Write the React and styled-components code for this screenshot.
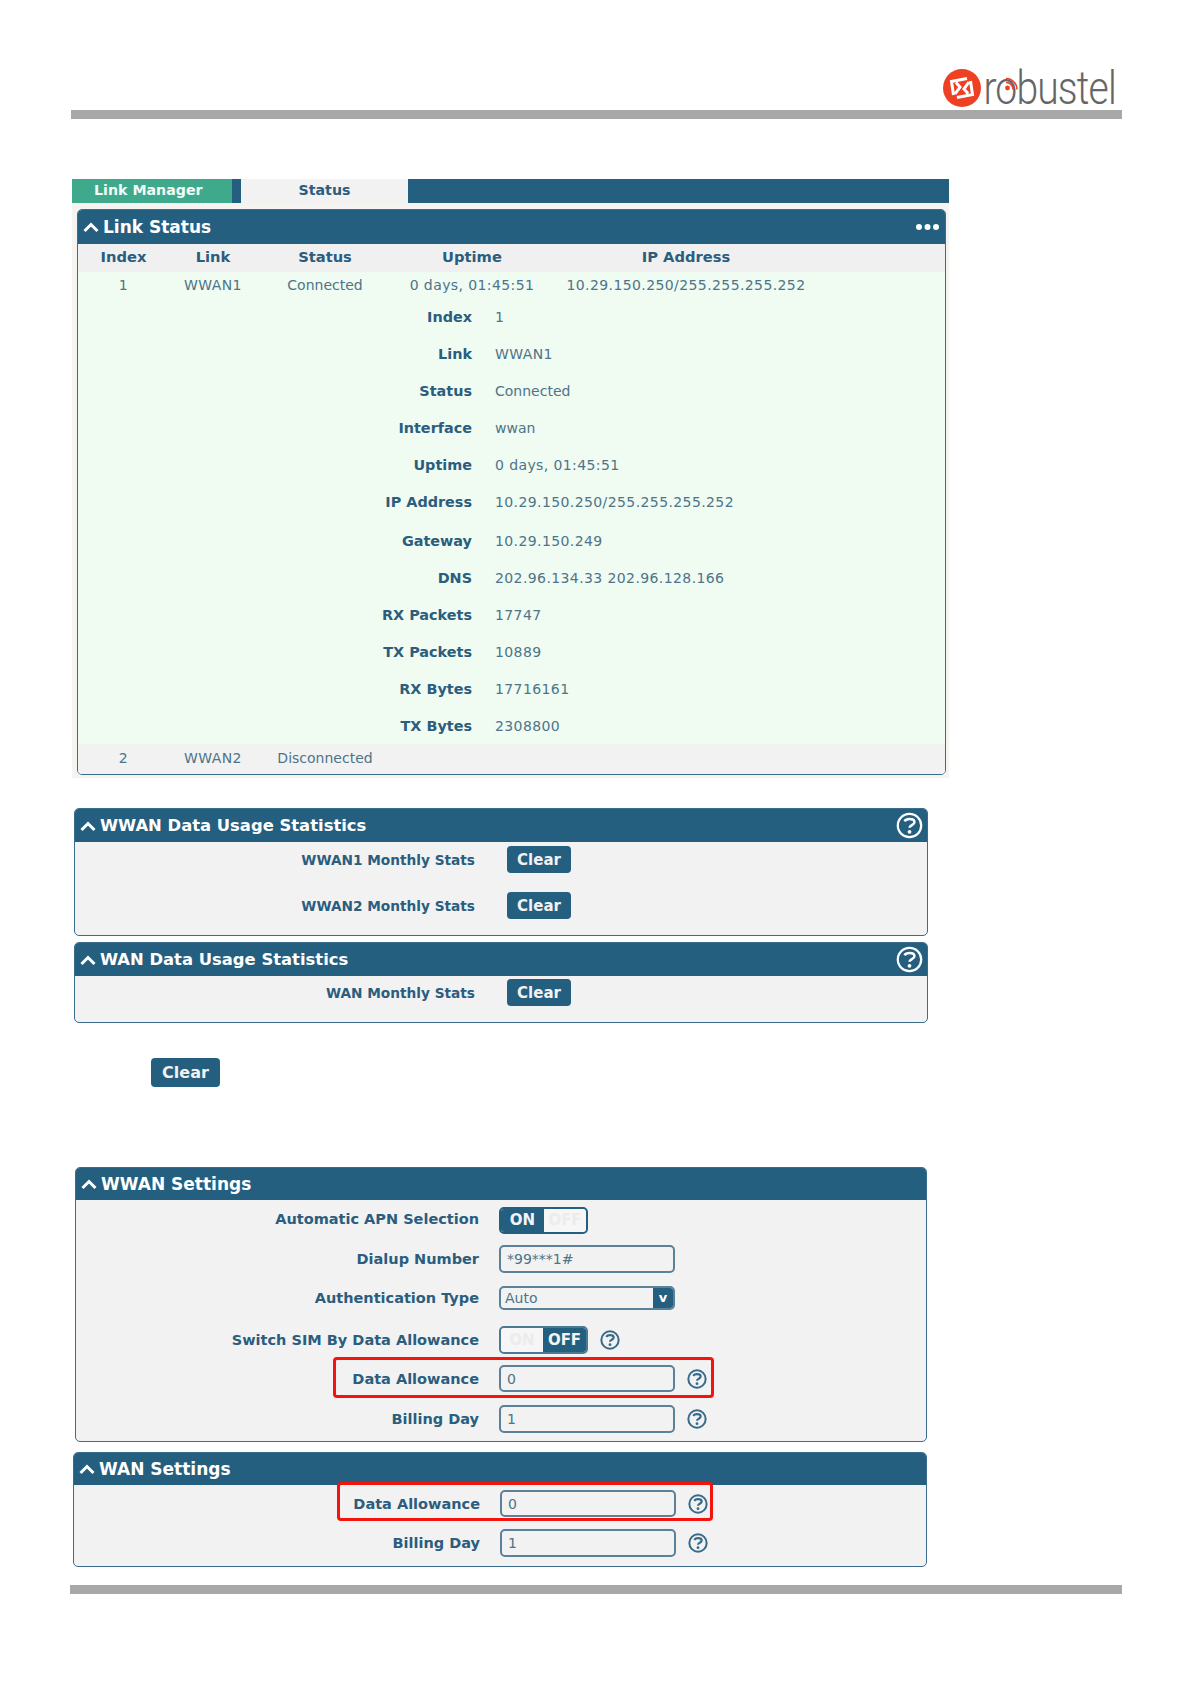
import React from "react"
import styled, { createGlobalStyle } from "styled-components"

const GlobalStyle = createGlobalStyle`
  html, body { margin: 0; padding: 0; background: #fff; }
  body { font-family: "DejaVu Sans", Verdana, sans-serif; }
`

const NAVY = "#255f80"
const LABEL = "#2b5d7e"
const VALUE = "#4d7489"

const Page = styled.div`
  width: 1191px;
  height: 1684px;
  display: flex;
  flex-direction: column;
  overflow: hidden;
`

const Brand = styled.header`
  height: 110px;
  display: flex;
  align-items: flex-end;
  justify-content: flex-end;
  padding: 0 75px 2px 0;
  box-sizing: border-box;
`

const BrandMark = styled.svg`
  margin-right: 5px;
  margin-bottom: 1px;
`

const BrandName = styled.span`
  position: relative;
  width: 130px;
  height: 40px;
  display: flex;
  justify-content: flex-end;
  font-family: Roboto, "Liberation Sans", sans-serif;
  font-size: 46px;
  font-weight: 300;
  line-height: 40px;
  letter-spacing: -1px;
  color: #666;
  white-space: nowrap;
`

const BrandText = styled.span`
  display: block;
  transform: scaleX(0.85);
  transform-origin: right center;
`

const Arcs = styled.svg`
  position: absolute;
  left: 19px;
  top: 9px;
`

const Rule = styled.div`
  height: 9px;
  margin: ${({ $mt }) => $mt || 0}px ${({ $right }) => $right}px 0 ${({ $left }) => $left}px;
  background: #a8a8a8;
`

const Tabs = styled.nav`
  height: 24px;
  display: flex;
  background: ${NAVY};
  font-size: 14.2px;
  font-weight: 700;
  line-height: 23px;
`

const Tab = styled.div`
  width: ${({ $w }) => $w}px;
  margin-right: ${({ $mr }) => $mr || 0}px;
  text-align: ${({ $active }) => ($active ? "center" : "left")};
  padding-left: ${({ $active }) => ($active ? 0 : 22)}px;
  box-sizing: border-box;
  color: ${({ $active }) => ($active ? LABEL : "#f2fbf8")};
  background: ${({ $active }) => ($active ? "#f2f2f2" : "#3fa98c")};
`

const StatusWrap = styled.div`
  width: 877px;
  margin: 60px 0 0 72px;
  padding-bottom: 3px;
  background: #f6f4f1;
`

const Panel = styled.section`
  width: ${({ $w }) => $w}px;
  margin: ${({ $mt }) => $mt || 0}px 0 0 ${({ $ml }) => $ml || 0}px;
  padding-bottom: ${({ $pb }) => $pb || 0}px;
  box-sizing: border-box;
  border: 1.5px solid #3a6d8c;
  border-radius: 5px;
  background: #f2f2f2;
  overflow: hidden;
`

const PanelHead = styled.div`
  height: ${({ $h }) => $h}px;
  display: flex;
  align-items: center;
  gap: 4px;
  padding: 0 4px 0 5px;
  background: ${NAVY};
  color: #fff;
  font-size: ${({ $fs }) => $fs || 17}px;
  font-weight: 700;
`

const HeadAction = styled.span`
  margin-left: auto;
  display: flex;
`

const TableRow = styled.div`
  display: grid;
  box-sizing: border-box;
  grid-template-columns: 91px 88px 136px 158px 270px 1fr;
  height: ${({ $h }) => $h}px;
  padding-bottom: ${({ $pb }) => $pb || 0}px;
  align-items: center;
  text-align: center;
  font-size: ${({ $head }) => ($head ? 14.7 : 14)}px;
  font-weight: ${({ $head }) => ($head ? 700 : 400)};
  color: ${({ $head }) => ($head ? LABEL : VALUE)};
  background: ${({ $bg }) => $bg};
`

const Cell = styled.span`
  letter-spacing: ${({ $digits }) => ($digits ? 0.4 : 0)}px;
`

const Detail = styled.div`
  background: #f0fbf2;
`

const DetailRow = styled.div`
  height: 37px;
  margin-top: ${({ $mt }) => $mt || 0}px;
  display: grid;
  grid-template-columns: 394px 1fr;
  column-gap: 23px;
  align-items: center;
  font-size: 14px;
`

const DetailLabel = styled.b`
  text-align: right;
  font-size: 14.4px;
  color: ${LABEL};
`

const DetailValue = styled(Cell)`
  color: ${VALUE};
`

const StatRow = styled.div`
  height: 27px;
  margin-top: ${({ $mt }) => $mt}px;
  display: grid;
  grid-template-columns: 400px 64px;
  column-gap: 32px;
  align-items: center;
`

const StatLabel = styled.b`
  text-align: right;
  font-size: 13.7px;
  color: ${LABEL};
`

const Button = styled.button`
  width: ${({ $w }) => $w || 64}px;
  height: ${({ $h }) => $h || 27}px;
  padding: 0;
  border: 0;
  border-radius: 4px;
  background: ${NAVY};
  color: #f2f2f2;
  font-family: inherit;
  font-size: ${({ $fs }) => $fs || 15}px;
  font-weight: 700;
`

const PageAction = styled.div`
  margin: 35px 0 0 151px;
  display: flex;
`

const Field = styled.div`
  position: relative;
  margin-top: ${({ $mt }) => $mt}px;
  display: grid;
  grid-template-columns: ${({ $lw }) => $lw || 403}px 176px auto;
  column-gap: 20px;
  align-items: center;
  height: ${({ $h }) => $h}px;
`

const FieldLabel = styled.b`
  text-align: right;
  font-size: 14.5px;
  color: ${LABEL};
  margin-bottom: ${({ $mb }) => $mb || 0}px;
`

const HelpSlot = styled.span`
  margin-left: ${({ $ml }) => $ml || -8}px;
  display: flex;
  color: #386a8a;
`

const Input = styled.div`
  height: 100%;
  box-sizing: border-box;
  border: 2px solid #5a8199;
  border-radius: 5px;
  padding-left: 6px;
  display: flex;
  align-items: center;
  font-size: 14px;
  color: ${VALUE};
`

const Select = styled(Input)`
  padding-left: 4px;
  overflow: hidden;
  justify-content: space-between;
`

const SelectArrow = styled.span`
  width: 20px;
  height: 100%;
  background: ${NAVY};
  color: #fff;
  font-size: 13px;
  font-weight: 700;
  text-align: center;
  line-height: 20px;
`

const Toggle = styled.div`
  width: 89px;
  height: 100%;
  box-sizing: border-box;
  border: 2px solid ${({ $on }) => ($on ? NAVY : "#4a7a96")};
  border-radius: 5px;
  display: flex;
  flex-direction: ${({ $on }) => ($on ? "row" : "row-reverse")};
  overflow: hidden;
  font-size: 15px;
  font-weight: 700;
`

const ToggleValue = styled.span`
  width: 43px;
  background: ${NAVY};
  color: #f4f4f4;
  text-align: center;
  line-height: ${({ $lh }) => $lh}px;
`

const ToggleKnob = styled.span`
  flex: 1;
  background: #f6f6f6;
  border-radius: 4px;
  color: #ececec;
  text-align: center;
  line-height: ${({ $lh }) => $lh}px;
`

const Highlight = styled.div`
  position: absolute;
  left: ${({ $l }) => $l}px;
  width: ${({ $w }) => $w}px;
  top: ${({ $t }) => $t}px;
  bottom: ${({ $b }) => $b}px;
  box-sizing: border-box;
  border: 3.5px solid #f3150d;
  border-radius: 4px;
  pointer-events: none;
`

const Chevron = () => (
  <svg width="16" height="12" viewBox="0 0 16 12">
    <path d="M1.5 10 8 3.5 14.5 10" fill="none" stroke="#fff" strokeWidth="3" />
  </svg>
)

const Dots = () => (
  <svg width="26" height="8" viewBox="0 0 26 8" fill="#fff">
    <circle cx="4" cy="4" r="3" />
    <circle cx="12.5" cy="4" r="3" />
    <circle cx="21" cy="4" r="3" />
  </svg>
)

const Help = ({ size = 20, sw = 2.4 }) => (
  <svg width={size} height={size} viewBox="0 0 24 24" fill="none" stroke="currentColor">
    <circle cx="12" cy="12" r="10.4" strokeWidth={sw} />
    <path d="M7.5 8.2C8.5 6.6 10 6.2 12 6.2c2.6 0 4.4 1 4.4 2.8 0 2.6-4.4 2.6-4.4 5" strokeWidth={sw * 1.1} />
    <circle cx="12" cy="17.6" r="1.7" fill="currentColor" stroke="none" />
  </svg>
)

const Logo = () => (
  <BrandMark width="38" height="38" viewBox="0 0 38 38">
    <circle cx="19" cy="19" r="19" fill="#ee4023" />
    <g fill="none" stroke="#fff" strokeWidth="3">
      <path d="M24 9.5 8.5 12.5 10.5 26M13 13.5l4 4.5-5 7" />
      <path d="M14 28.5l15.5-3L27.5 12M25 24.5L21 20l5-7" />
    </g>
  </BrandMark>
)

const columns = ["Index", "Link", "Status", "Uptime", "IP Address"]
const row1 = ["1", "WWAN1", "Connected", "0 days, 01:45:51", "10.29.150.250/255.255.255.252"]
const row2 = ["2", "WWAN2", "Disconnected", "", ""]

const details = [
  ["Index", "1"],
  ["Link", "WWAN1"],
  ["Status", "Connected"],
  ["Interface", "wwan"],
  ["Uptime", "0 days, 01:45:51"],
  ["IP Address", "10.29.150.250/255.255.255.252"],
  ["Gateway", "10.29.150.249"],
  ["DNS", "202.96.134.33 202.96.128.166"],
  ["RX Packets", "17747"],
  ["TX Packets", "10889"],
  ["RX Bytes", "17716161"],
  ["TX Bytes", "2308800"],
]

const hasDigits = v => /\d/.test(v)

const Cells = ({ values }) =>
  values.map((v, i) => (
    <Cell key={i} $digits={hasDigits(v)}>
      {v}
    </Cell>
  ))

const Section = ({ title, w, mt, ml, h, fs, pb, action, children }) => (
  <Panel $w={w} $mt={mt} $ml={ml} $pb={pb}>
    <PanelHead $h={h} $fs={fs}>
      <Chevron />
      {title}
      {action && <HeadAction>{action}</HeadAction>}
    </PanelHead>
    {children}
  </Panel>
)

const App = () => (
  <Page>
    <GlobalStyle />
    <Brand>
      <Logo />
      <BrandName>
        <BrandText>robustel</BrandText>
        <Arcs width="13" height="16" viewBox="0 0 13 16" fill="none" stroke="#ee4023">
          <path d="M1 5.5a7 7 0 0 1 7 7M1 1.5a11 11 0 0 1 11 11" strokeWidth="1.6" />
          <circle cx="2.5" cy="11" r="2.4" fill="#ee4023" stroke="none" />
        </Arcs>
      </BrandName>
    </Brand>
    <Rule $left={71} $right={69} />

    <StatusWrap>
      <Tabs>
        <Tab $w={160} $mr={9}>Link Manager</Tab>
        <Tab $w={167} $active>Status</Tab>
      </Tabs>
      <Section title="Link Status" w={869} mt={6} ml={5} h={34} action={<Dots />}>
        <TableRow $h={28} $pb={3} $head $bg="#f0f0f0">
          {columns.map(c => <span key={c}>{c}</span>)}
        </TableRow>
        <TableRow $h={26} $bg="#f0fbf2">
          <Cells values={row1} />
        </TableRow>
        <Detail>
          {details.map(([label, value]) => (
            <DetailRow key={label} $mt={label === "Gateway" ? 2 : 0}>
              <DetailLabel>{label}</DetailLabel>
              <DetailValue $digits={hasDigits(value)}>{value}</DetailValue>
            </DetailRow>
          ))}
        </Detail>
        <TableRow $h={30} $pb={2} $bg="#f2f2f2">
          <Cells values={row2} />
        </TableRow>
      </Section>
    </StatusWrap>

    <Section
      title="WWAN Data Usage Statistics"
      w={854}
      mt={30}
      ml={74}
      h={33}
      fs={16.4}
      pb={16}
      action={<Help size={27} sw={2} />}
    >
      <StatRow $mt={4}>
        <StatLabel>WWAN1 Monthly Stats</StatLabel>
        <Button>Clear</Button>
      </StatRow>
      <StatRow $mt={19}>
        <StatLabel>WWAN2 Monthly Stats</StatLabel>
        <Button>Clear</Button>
      </StatRow>
    </Section>
    <Section
      title="WAN Data Usage Statistics"
      w={854}
      mt={6}
      ml={74}
      h={33}
      fs={16.4}
      pb={16}
      action={<Help size={27} sw={2} />}
    >
      <StatRow $mt={3}>
        <StatLabel>WAN Monthly Stats</StatLabel>
        <Button>Clear</Button>
      </StatRow>
    </Section>

    <PageAction>
      <Button $w={69} $h={29} $fs={16}>Clear</Button>
    </PageAction>

    <Section title="WWAN Settings" w={852} mt={80} ml={75} h={32} pb={8}>
      <Field $mt={7} $h={27}>
        <FieldLabel $mb={4}>Automatic APN Selection</FieldLabel>
        <Toggle $on>
          <ToggleValue $lh={23}>ON</ToggleValue>
          <ToggleKnob $lh={23}>OFF</ToggleKnob>
        </Toggle>
      </Field>
      <Field $mt={11} $h={28}>
        <FieldLabel>Dialup Number</FieldLabel>
        <Input>*99***1#</Input>
      </Field>
      <Field $mt={13} $h={24}>
        <FieldLabel>Authentication Type</FieldLabel>
        <Select>Auto<SelectArrow>v</SelectArrow></Select>
      </Field>
      <Field $mt={16} $h={28}>
        <FieldLabel>Switch SIM By Data Allowance</FieldLabel>
        <Toggle>
          <ToggleValue $lh={24}>OFF</ToggleValue>
          <ToggleKnob $lh={24}>ON</ToggleKnob>
        </Toggle>
        <HelpSlot $ml={-95}><Help /></HelpSlot>
      </Field>
      <Field $mt={11} $h={27}>
        <FieldLabel>Data Allowance</FieldLabel>
        <Input>0</Input>
        <HelpSlot><Help /></HelpSlot>
        <Highlight $l={257} $w={381} $t={-8} $b={-6} />
      </Field>
      <Field $mt={13} $h={28}>
        <FieldLabel>Billing Day</FieldLabel>
        <Input>1</Input>
        <HelpSlot><Help /></HelpSlot>
      </Field>
    </Section>

    <Section title="WAN Settings" w={854} mt={10} ml={73} h={32} pb={9}>
      <Field $mt={5} $h={27} $lw={406}>
        <FieldLabel>Data Allowance</FieldLabel>
        <Input>0</Input>
        <HelpSlot><Help /></HelpSlot>
        <Highlight $l={263} $w={376} $t={-8} $b={-4} />
      </Field>
      <Field $mt={12} $h={28} $lw={406}>
        <FieldLabel>Billing Day</FieldLabel>
        <Input>1</Input>
        <HelpSlot><Help /></HelpSlot>
      </Field>
    </Section>

    <Rule $left={70} $right={69} $mt={18} />
  </Page>
)

export default App
